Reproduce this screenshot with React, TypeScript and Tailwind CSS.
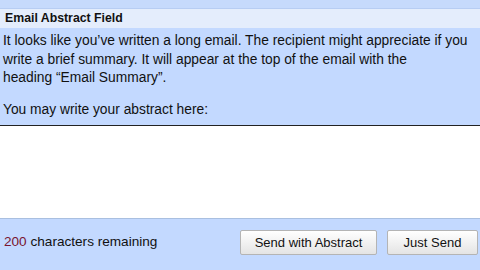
import React from "react";

export default function App() {
  return (
    <div
      className="w-[480px] h-[270px] overflow-hidden bg-[#c3d9ff] flex flex-col text-[#111]"
      style={{ fontFamily: '"Liberation Sans", Arial, sans-serif' }}
    >
      <div className="h-[8px] bg-[#c6dafc]" />
      <div className="h-[20px] bg-[#e4edfc] border-t border-[#b7cdf3] flex items-center pl-[5px]">
        <span className="text-[12.3px] font-bold leading-none">Email Abstract Field</span>
      </div>
      <div className="px-[3px] pt-[4px] text-[13.8px] leading-[18.5px] whitespace-nowrap">
        <p>
          It looks like you’ve written a long email. The recipient might appreciate if you
          <br />
          write a brief summary. It will appear at the top of the email with the
          <br />
          heading “Email Summary”.
        </p>
        <p className="mt-[13px]">You may write your abstract here:</p>
      </div>
      <div className="mt-[6px] h-[94px] bg-white border-t-[1.5px] border-[#222] border-b border-b-[#a9bfe0]" />
      <div className="flex-1 flex items-center justify-between pl-[4px] pr-[2px] pb-[4px]">
        <span className="text-[13.6px]">
          <span className="text-[#7a1530]">200</span> characters remaining
        </span>
        <div className="flex gap-[10px]">
          <button className="w-[137px] h-[25px] rounded-[2px] border border-[#b4b4b4] bg-gradient-to-b from-white to-[#e4e4e4] text-[13px] text-[#111]">
            Send with Abstract
          </button>
          <button className="w-[91px] h-[25px] rounded-[2px] border border-[#b4b4b4] bg-gradient-to-b from-white to-[#e4e4e4] text-[13px] text-[#111]">
            Just Send
          </button>
        </div>
      </div>
    </div>
  );
}
